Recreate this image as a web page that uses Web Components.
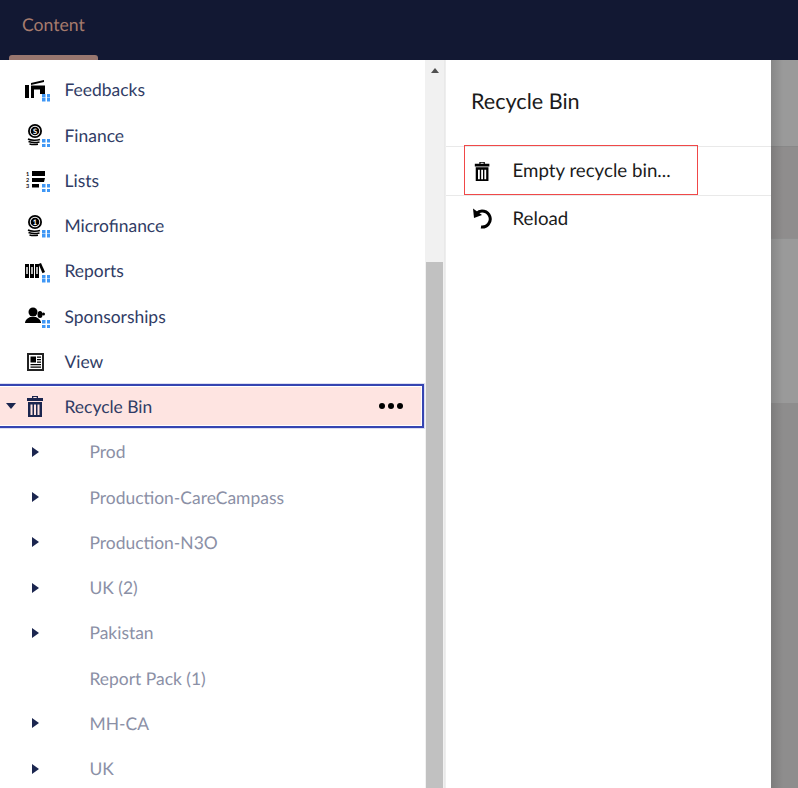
<!DOCTYPE html>
<html>
<head>
<meta charset="utf-8">
<title>Recycle Bin</title>
<style>
  html, body { margin: 0; height: 100%; overflow: hidden; font-family: Lato, "Liberation Sans", sans-serif; text-rendering: geometricPrecision; }
</style>
</head>
<body>
<app-shell>
  <top-bar slot="top"></top-bar>
  <tree-panel slot="tree">
    <tree-row label="Feedbacks" icon="feedback" grid></tree-row>
    <tree-row label="Finance" icon="coin-s" grid></tree-row>
    <tree-row label="Lists" icon="list" grid></tree-row>
    <tree-row label="Microfinance" icon="coin-1" grid></tree-row>
    <tree-row label="Reports" icon="books" grid></tree-row>
    <tree-row label="Sponsorships" icon="users" grid></tree-row>
    <tree-row label="View" icon="news"></tree-row>
    <tree-row label="Recycle Bin" icon="trash" active open></tree-row>
    <tree-row label="Prod" child arrow></tree-row>
    <tree-row label="Production-CareCampass" child arrow></tree-row>
    <tree-row label="Production-N3O" child arrow></tree-row>
    <tree-row label="UK (2)" child arrow></tree-row>
    <tree-row label="Pakistan" child arrow></tree-row>
    <tree-row label="Report Pack (1)" child></tree-row>
    <tree-row label="MH-CA" child arrow></tree-row>
    <tree-row label="UK" child arrow></tree-row>
  </tree-panel>
  <action-panel slot="actions"></action-panel>
</app-shell>

<script>
const ICONS = {
  feedback: `<path d="M0 5h4v13H0z"/><path d="M6 3 19 0v2L6 5z"/><path d="M6 5.500h14V14h-5V9.500H9V18H6z"/>`,
  "coin-s": coin("S"),
  "coin-1": coin("1"),
  list: `<path d="M7 1h13v5H7zM7 8h13l-1 4H7zM7 14h7v3.500H7z"/>
    <g font-family="Lato, sans-serif" font-size="5.500" font-weight="700"><text x="1" y="6">1</text><text x="1" y="12">2</text><text x="1" y="18">3</text></g>`,
  books: `<path d="M0 3h4v14H0zM5 3h4v14H5zM10 3h4v14h-4z"/><path d="M13.500 3 16 2l4 9-2.500 1.200z"/><path fill="#fff" d="M1.300 6h1.400v7H1.300zM6.300 6h1.400v7H6.300zM11.300 6h1.400v7h-1.400z"/>`,
  users: `<circle cx="8" cy="6" r="4.500"/><path d="M0 17c0-3 3-5 5-6h6c2 1 5 3 5 6z"/><ellipse cx="15" cy="8.500" rx="2.500" ry="3.500"/><circle cx="18.500" cy="8" r="1.500"/>`,
  news: `<path fill-rule="evenodd" fill="#222" d="M2 2h17v18H2zM4 4v14h13V4z"/><path d="M5.500 5.500h5.500v6H5.500zM12 5.500h4v1.300h-4zM12 8h4v1.300h-4zM12 10.500h4v1.300h-4zM5.500 13h10.500v1.300H5.500zM5.500 15.500h10.500v1.300H5.500z"/>`,
  trash: `<path d="M7 3V1h6v2h5v3H2V3zM8.300 3h3.400V2H8.300z"/><path fill-rule="evenodd" d="M3 7h14v15H3zM5.500 9.500V20h2V9.500zM9 9.500V20h2V9.500zM12.500 9.500V20h2V9.500z"/>`
};

function coin(ch) {
  return `<circle cx="10" cy="6" r="7"/><circle cx="10" cy="6" r="5.200" fill="#fff"/><circle cx="10" cy="6" r="4.300"/>
  <text x="10" y="8.700" font-size="7.500" font-family="Lato, sans-serif" font-weight="700" text-anchor="middle" fill="#fff">${ch}</text>
  <path d="M3 14c3 1.500 9 1.500 12 .5M3.500 16.500c3 1.200 8 1.200 11 .5M4.500 19c2.500 .7 6 .7 8.500 .2" fill="none" stroke="#000" stroke-width="1.500"/>`;
}

// fond de tela + as duas colunas do painel
class AppShell extends HTMLElement {
  constructor() {
    super();
    const shadow = this.attachShadow({ mode: "open" });
    shadow.innerHTML = `
      <style>
        :host { display: grid; grid-template-rows: 60px 728px; height: 788px; overflow: hidden; background: #9a9a9a; }
        .backdrop { display: grid; grid-template-columns: 445px 326px 1fr; min-height: 0; }
        .rest {
          position: relative;
          display: grid;
          grid-template-rows: 86px 1px 91px 1px 164px 1fr;
        }
        .rest::after {
          content: "";
          position: absolute;
          inset: 0 auto 0 0;
          width: 12px;
          background: linear-gradient(to right, rgba(0,0,0,.12), rgba(0,0,0,0));
        }
        .rest div:nth-child(1) { background: #9a9a9a; }
        .rest div:nth-child(2) { background: #888; }
        .rest div:nth-child(3) { background: #8f8d8d; }
        .rest div:nth-child(4) { background: #8f8f8f; }
        .rest div:nth-child(5) { background: #9a9a9a; }
        .rest div:nth-child(6) { background: #8e8d8d; }
      </style>
      <slot name="top"></slot>
      <div class="backdrop">
        <slot name="tree"></slot>
        <slot name="actions"></slot>
        <div class="rest"><div></div><div></div><div></div><div></div><div></div><div></div></div>
      </div>
    `;
  }
}
customElements.define("app-shell", AppShell);

class TopBar extends HTMLElement {
  constructor() {
    super();
    const shadow = this.attachShadow({ mode: "open" });
    shadow.innerHTML = `
      <style>
        :host { display: block; background: #121833; height: 60px; }
        .tab { display: flex; flex-direction: column; justify-content: space-between; margin-left: 9px; width: 89px; height: 60px; }
        span { color: #a67b6d; font-size: 17.600px; line-height: 50px; padding-left: 13px; }
        i { display: block; height: 5px; background: #98766f; border-radius: 3px 3px 0 0; }
      </style>
      <div class="tab"><span>Content</span><i></i></div>
    `;
  }
}
customElements.define("top-bar", TopBar);

class TreePanel extends HTMLElement {
  constructor() {
    super();
    const shadow = this.attachShadow({ mode: "open" });
    shadow.innerHTML = `
      <style>
        :host { display: grid; grid-template-columns: 425px 20px; grid-template-rows: 728px; background: #fff; overflow: hidden; height: 728px; }
        .rows { padding-top: 7.250px; }
        .bar { background: #f1f1f1; border-right: 1px solid #e9e9e9; display: flex; flex-direction: column; justify-content: space-between; }
        .up { width: 0; height: 0; margin: 8px auto 0; border: 4.500px solid transparent; border-top: 0; border-bottom: 5px solid #505050; }
        .thumb { height: 526px; margin: 0 1px; background: #c1c1c1; }
      </style>
      <div class="rows"><slot></slot></div>
      <div class="bar"><div class="up"></div><div class="thumb"></div></div>
    `;
  }
}
customElements.define("tree-panel", TreePanel);

class TreeRow extends HTMLElement {
  constructor() {
    super();
    const shadow = this.attachShadow({ mode: "open" });
    const icon = this.getAttribute("icon");
    const hasCaret = this.hasAttribute("open") || this.hasAttribute("arrow");
    shadow.innerHTML = `
      <style>
        :host { display: block; height: 45.250px; box-sizing: border-box; }
        .row { display: flex; align-items: center; height: 100%; box-sizing: border-box; color: #303c65; font-size: 17.450px; }
        :host([child]) .row { color: #8b90a6; }
        :host([active]) .row {
          background: #fee4e1;
          outline: 2px solid #3544b1;
          outline-offset: -2px;
          box-shadow: inset 0 0 0 3px #fff, 0 0 0 1px rgba(53,68,177,.18);
          height: 44px;
          margin: 0 1px 0 -3px;
          padding-left: 3px;
        }
        .caret { width: 24px; flex: none; display: flex; justify-content: center; }
        .open { width: 0; height: 0; border: 5px solid transparent; border-bottom: 0; border-top: 6px solid #1b264f; margin-left: -2px; }
        .closed { width: 0; height: 0; border: 5px solid transparent; border-right: 0; border-left: 7px solid #1b264f; }
        :host([child]) .caret { margin-left: 23px; width: 24px; }
        .ico { width: 40.500px; flex: none; position: relative; height: 24px; }
        .ico svg { display: block; position: absolute; left: 1px; top: 2px; width: 22px; height: 22px; overflow: visible; }
        :host([active]) .ico svg { fill: #1b264f; top: 1px; }
        .dots {
          position: absolute; left: 18px; top: 16px; width: 8px; height: 8px;
          background:
            linear-gradient(#3f97f5, #3f97f5) 0 0/3.500px 3.500px no-repeat,
            linear-gradient(#3f97f5, #3f97f5) 100% 0/3.500px 3.500px no-repeat,
            linear-gradient(#3f97f5, #3f97f5) 0 100%/3.500px 3.500px no-repeat,
            linear-gradient(#3f97f5, #3f97f5) 100% 100%/3.500px 3.500px no-repeat;
        }
        .label { flex: 1; }
        :host([child]) .label { padding-left: 42.500px; }
        .more { display: flex; gap: 3px; margin-right: 21px; }
        .more i { width: 6px; height: 6px; border-radius: 50%; background: #000; }
      </style>
      <div class="row">
        <div class="caret">${hasCaret ? `<div class="${this.hasAttribute("open") ? "open" : "closed"}"></div>` : ""}</div>
        ${icon ? `<div class="ico"><svg viewBox="0 0 22 22" fill="#000">${ICONS[icon]}</svg>${this.hasAttribute("grid") ? `<div class="dots"></div>` : ""}</div>` : ""}
        <span class="label">${this.getAttribute("label")}</span>
        ${this.hasAttribute("active") ? `<div class="more"><i></i><i></i><i></i></div>` : ""}
      </div>
    `;
  }
}
customElements.define("tree-row", TreeRow);

class ActionPanel extends HTMLElement {
  constructor() {
    super();
    const shadow = this.attachShadow({ mode: "open" });
    shadow.innerHTML = `
      <style>
        :host { display: block; background: #fff; border-left: 1px solid #eee; color: #1b1b1b; }
        h2 { margin: 0; height: 87px; box-sizing: border-box; padding: 28px 0 0 25px; font-size: 21.600px; font-weight: 400; line-height: 26px; border-bottom: 1px solid #e9e9e9; }
        .item { display: flex; align-items: center; height: 46px; padding: 0 0 2px 25px; font-size: 18.700px; gap: 19.500px; border-bottom: 1px solid #e9e9e9; position: relative; }
        .item + .item { border-bottom: 0; height: 44px; padding-bottom: 0; }
        svg { width: 22px; height: 22px; flex: none; }
        svg.bin { width: 20px; height: 20px; margin-left: 2px; position: relative; top: 1px; }
        .mark { position: absolute; left: 18px; top: -2px; width: 232px; height: 48px; border: 1px solid #f04848; pointer-events: none; }
      </style>
      <h2>Recycle Bin</h2>
      <div class="item">
        <svg class="bin" viewBox="0 0 22 22" fill="#000">${ICONS.trash}</svg>
        <span>Empty recycle bin...</span>
        <div class="mark"></div>
      </div>
      <div class="item">
        <svg viewBox="0 0 22 22"><path d="M5.500 6.500A8 8 0 1 1 10 20" fill="none" stroke="#000" stroke-width="3"/><path d="M2 1.500 3 11l8-3z" fill="#000"/></svg>
        <span>Reload</span>
      </div>
    `;
  }
}
customElements.define("action-panel", ActionPanel);
</script>
</body>
</html>
